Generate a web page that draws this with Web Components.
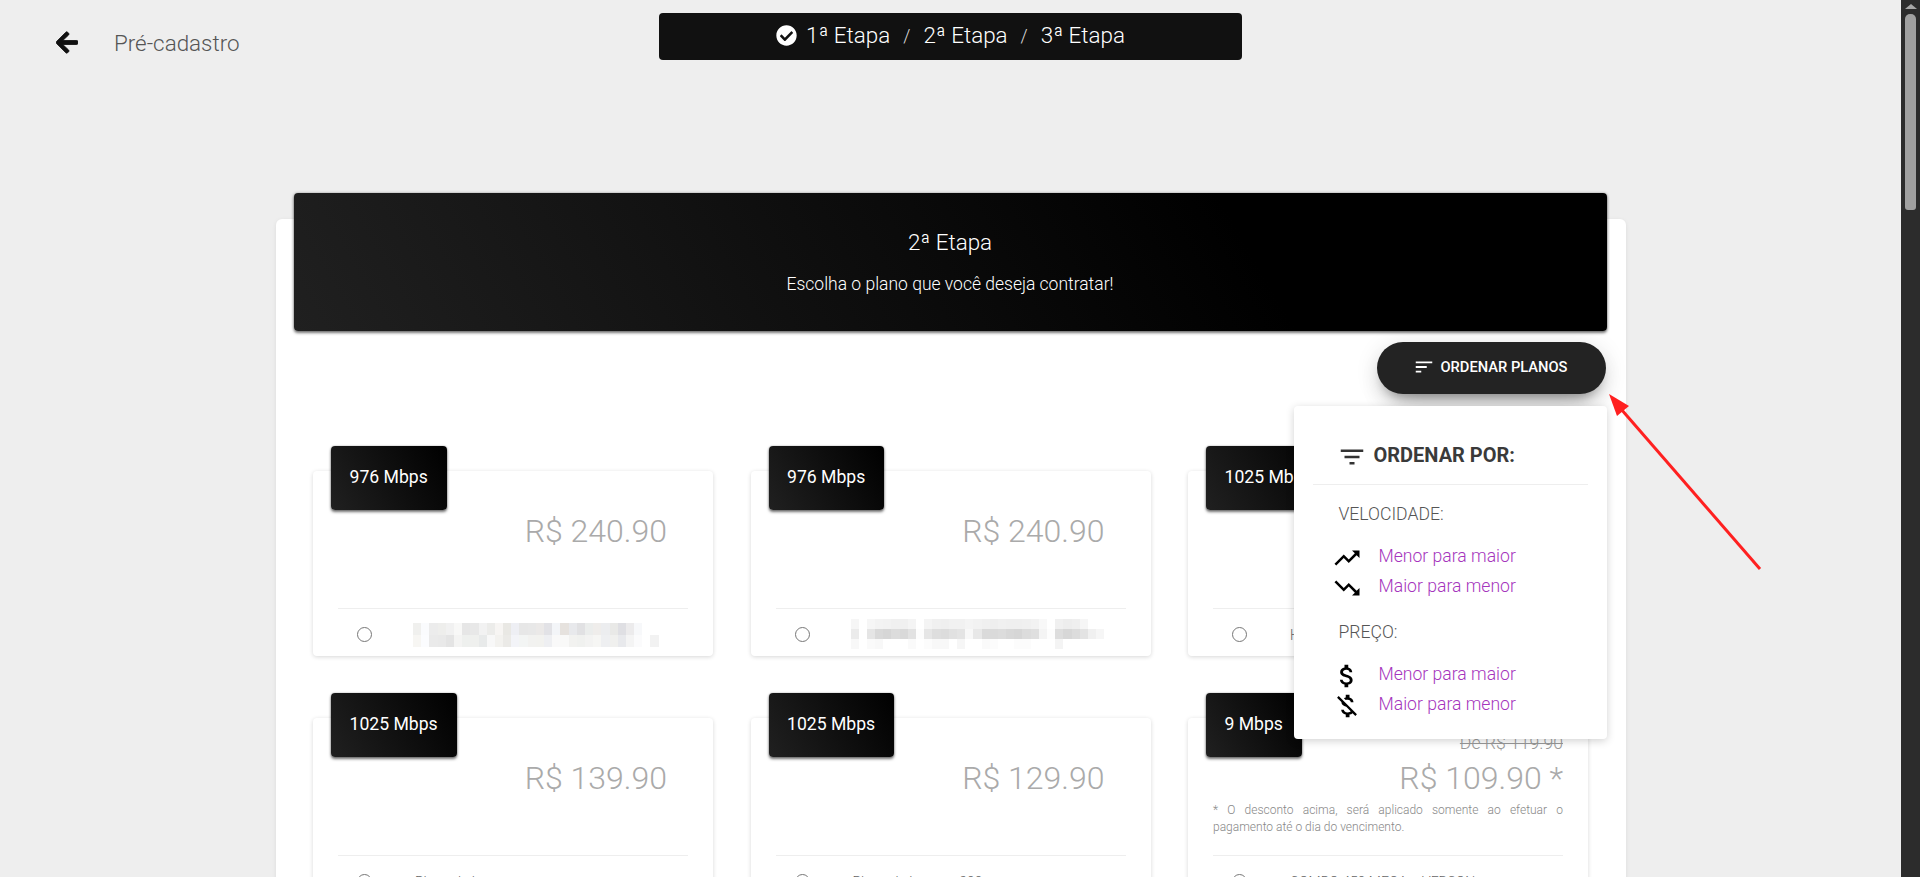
<!DOCTYPE html>
<html lang="pt-BR">
<head>
<meta charset="utf-8">
<title>Pré-cadastro</title>
<style>
html,body{margin:0;height:877px;overflow:hidden;background:#eee;font-family:Roboto,"Liberation Sans",sans-serif}
body{display:flex;position:relative}
#page{flex:1;min-width:0}
</style>
</head>
<body>
<div id="page">
  <app-topbar title-text="Pré-cadastro"></app-topbar>
  <panel-card>
    <panel-header slot="header" heading="2ª Etapa" sub="Escolha o plano que você deseja contratar!"></panel-header>
    <sort-control slot="tools"></sort-control>
    <plan-card speed="976 Mbps" price="R$ 240.90" blur="a"></plan-card>
    <plan-card speed="976 Mbps" price="R$ 240.90" blur="b"></plan-card>
    <plan-card speed="1025 Mbps" price="R$ 240.90" label="H"></plan-card>
    <plan-card speed="1025 Mbps" price="R$ 139.90" label="Plano de internet"></plan-card>
    <plan-card speed="1025 Mbps" price="R$ 129.90" label="Plano de internet 200"></plan-card>
    <plan-card speed="9 Mbps" old="De R$ 119.90" price="R$ 109.90 *" label="COMBO 450 MEGA + VERSON" note="* O desconto acima, será aplicado somente ao efetuar o pagamento até o dia do vencimento."></plan-card>
  </panel-card>
</div>
<fake-scrollbar></fake-scrollbar>
<pointer-arrow></pointer-arrow>
<script>
const ICON = {
  back:'<svg viewBox="0 0 448 512" width="22" height="25" fill="#111" stroke="#111" stroke-width="18" stroke-linejoin="round"><path d="M257.5 445.1l-22.2 22.2c-9.4 9.4-24.6 9.4-33.9 0L7 273c-9.4-9.4-9.4-24.6 0-33.9L201.4 44.7c9.4-9.4 24.6-9.4 33.9 0l22.2 22.2c9.5 9.5 9.3 25-.4 34.3L136.6 216H424c13.3 0 24 10.7 24 24v32c0 13.3-10.7 24-24 24H136.6l120.5 114.8c9.8 9.3 10 24.8.4 34.3z"/></svg>',
  check:'<svg viewBox="0 0 512 512" width="21" height="21" fill="#fff"><path d="M504 256c0 136.967-111.033 248-248 248S8 392.967 8 256 119.033 8 256 8s248 111.033 248 248zM227.314 387.314l184-184c6.248-6.248 6.248-16.379 0-22.627l-22.627-22.627c-6.248-6.249-16.379-6.25-22.628 0L216 308.118l-70.059-70.059c-6.248-6.248-16.379-6.248-22.628 0l-22.627 22.627c-6.248 6.248-6.248 16.379 0 22.627l104 104c6.249 6.249 16.379 6.249 22.628.001z"/></svg>',
  sort:'M3 18h6v-2H3v2zM3 6v2h18V6H3zm0 7h12v-2H3v2z',
  filter:'M10 18h4v-2h-4v2zM3 6v2h18V6H3zm3 7h12v-2H6v2z',
  up:'M16 6l2.29 2.29-4.88 4.88-4-4L2 16.59 3.41 18l6-6 4 4 6.3-6.29L22 12V6z',
  down:'M16 18l2.29-2.29-4.88-4.88-4 4L2 7.41 3.41 6l6 6 4-4 6.3 6.29L22 12v6z',
  money:'M11.8 10.9c-2.27-.59-3-1.2-3-2.15 0-1.09 1.01-1.85 2.7-1.85 1.78 0 2.44.85 2.5 2.1h2.21c-.07-1.72-1.12-3.3-3.21-3.81V3h-3v2.16c-1.94.42-3.5 1.68-3.5 3.61 0 2.31 1.91 3.46 4.7 4.13 2.5.6 3 1.48 3 2.41 0 .69-.49 1.79-2.7 1.79-2.06 0-2.87-.92-2.98-2.1h-2.2c.12 2.19 1.76 3.42 3.68 3.83V21h3v-2.15c1.95-.37 3.5-1.5 3.5-3.55 0-2.84-2.43-3.81-4.7-4.4z',
  moneyOff:'M12.5 6.9c1.78 0 2.44.85 2.5 2.1h2.21c-.07-1.72-1.12-3.3-3.21-3.81V3h-3v2.16c-.53.12-1.03.3-1.48.54l1.47 1.47c.41-.17.91-.27 1.51-.27zM5.33 4.06L4.06 5.33 7.5 8.77c0 2.08 1.56 3.21 3.91 3.91l3.51 3.51c-.34.48-1.05.91-2.42.91-2.06 0-2.87-.92-2.98-2.1h-2.2c.12 2.19 1.76 3.42 3.68 3.83V21h3v-2.15c.96-.18 1.82-.55 2.45-1.12l2.22 2.22 1.27-1.27L5.33 4.06z'
};
const mi = (d,s,fill) => `<svg viewBox="0 0 24 24" width="${s}" height="${s}" fill="${fill}"><path d="${d}"/></svg>`;
const define = (name, render) => customElements.define(name, class extends HTMLElement {
  connectedCallback(){ if(!this.shadowRoot){ this.attachShadow({mode:'open'}).innerHTML = render(this); } }
});

define('app-topbar', el => `<style>
:host{display:grid;grid-template-columns:1fr 583px 1fr;padding-top:13px;height:47px;color:#fff}
.left{display:flex;align-items:center;padding-left:56px;height:46px;margin-top:7px;color:#555;font:300 22.4px/1 Roboto,sans-serif}
.left svg{margin-right:36px;margin-top:-1px}
.bar{display:flex;align-items:center;justify-content:center;height:47px;padding-bottom:3px;box-sizing:border-box;border-radius:4px;background:#111;font:300 22.4px/1 Roboto,sans-serif}
.bar svg{margin-right:9px;margin-top:1px}
.sep{font-size:18px;margin:2px 13px 0 13px;color:#ddd}
</style>
<div class="left">${ICON.back}<span>${el.getAttribute('title-text')}</span></div>
<div class="bar">${ICON.check}<span>1ª Etapa</span><span class="sep">/</span><span>2ª Etapa</span><span class="sep">/</span><span>3ª Etapa</span></div>`);

define('panel-card', () => `<style>
:host{display:flow-root;width:1350px;height:900px;margin:159px auto 0;box-sizing:border-box;padding:0 19px 0 18px;background:#fff;border-radius:6px;box-shadow:0 1px 4px rgba(0,0,0,.08)}
.tools{display:flex;justify-content:flex-end;margin-top:11px;padding-right:1px;position:relative;z-index:3}
.grid{display:grid;grid-template-columns:repeat(3,400px);column-gap:37.5px;row-gap:62px;margin-top:77px;padding-left:19.5px}
</style>
<slot name="header"></slot>
<div class="tools"><slot name="tools"></slot></div>
<div class="grid"><slot></slot></div>`);

define('panel-header', el => `<style>
:host{display:flex;flex-direction:column;align-items:center;height:138px;margin-top:-26px;box-sizing:border-box;padding-top:36px;position:relative;border-radius:4px;color:#fff;background:linear-gradient(60deg,#202020 0%,#000 72%);box-shadow:0 2px 3px rgba(0,0,0,.5),0 0 3px rgba(0,0,0,.3)}
.h{font:300 22.4px/26px Roboto,sans-serif}
.s{font:300 17.5px/22px Roboto,sans-serif;margin-top:18px}
</style>
<div class="h">${el.getAttribute('heading')}</div><div class="s">${el.getAttribute('sub')}</div>`);

define('sort-control', () => `<style>
:host{display:block;position:relative}
.btn{display:flex;align-items:center;justify-content:center;gap:5px;box-sizing:border-box;width:229px;height:52px;padding:0 1px 2px 0;border-radius:26px;background:#232323;color:#fff;font:500 14.7px/1 Roboto,sans-serif;box-shadow:0 14px 26px -12px rgba(0,0,0,.42),0 4px 23px 0 rgba(0,0,0,.12),0 8px 10px -5px rgba(0,0,0,.2)}
.menu{position:absolute;right:-1px;top:64px;width:313px;height:333px;box-sizing:border-box;background:#fff;border-radius:4px;box-shadow:0 2px 8px rgba(0,0,0,.18);padding-top:34px}
.head{display:flex;align-items:center;height:30px;margin:0 19px;padding:0 0 14px 24px;border-bottom:1px solid #eee;color:#3a3a3a;font:700 20px/30px Roboto,sans-serif}
.head svg{margin-right:7px;margin-top:4px;flex:none}
.label{margin:14px 0 12px 45px;font:300 17.6px/30px Roboto,sans-serif;color:#555}
.label.second{margin-top:16px}
.row{display:flex;height:30px;padding-left:38px;align-items:center;color:#a535bd;font:300 17.6px/30px Roboto,sans-serif}
.row svg{margin-right:17px;margin-top:3px;flex:none}
</style>
<div class="btn">${mi(ICON.sort,22,'#fff')}<span>ORDENAR PLANOS</span></div>
<div class="menu">
  <div class="head">${mi(ICON.filter,30,'#333')}<span>ORDENAR POR:</span></div>
  <div class="label">VELOCIDADE:</div>
  <div class="row">${mi(ICON.up,30,'#000')}<span>Menor para maior</span></div>
  <div class="row">${mi(ICON.down,30,'#000')}<span>Maior para menor</span></div>
  <div class="label second">PREÇO:</div>
  <div class="row">${mi(ICON.money,30,'#000')}<span>Menor para maior</span></div>
  <div class="row">${mi(ICON.moneyOff,30,'#000')}<span>Maior para menor</span></div>
</div>`);

const BLUR = {
  a:{y:1,h:12,rows:[
    'f0f0ee fafbfd ececec eeeeec f1f1f1 f8f8f7 e6e6e6 e8e8e8 f2f2f2 ececea f7f5f3 e9e8e4 eeeff4 e7e7e7 e8e8e8 ebe9e8 e2e2e6 f3f5f8 e6e2de e8e9ec e1e1e3 ebedec efedeb ecedef e9e9e7 dfdfe3 ecebec f7f8fa ffffff ffffff',
    'f7f6f3 fbfcfe eaeaea e9e9e9 e4e4e4 f4f4f3 eef0ee eff0ee e8eaea f8f8f8 f3f2ef ebeae7 f3f4f8 f3f5f4 f2f2f0 f2f2ef eeeff2 f9f9f9 f9f9f8 f2f2f0 f0f1ef f3f3f2 f6f6f4 eeeff1 f0f0ee e8e9ec f4f4f4 fbfbfc ffffff f2f2f2']},
  b:{y:-2,h:10,rows:[
    'f6f6f6 ffffff f6f6f6 f3f3f3 f2f2f2 f0f0f0 f0f0f0 f4f4f4 ffffff f4f4f4 f0f0f0 efefef f1f1f1 f1f1f1 f4f4f4 f2f2f2 f0f0f0 eeeeee f0f0f0 efefef efefef f0f0f0 f2f2f2 f8f8f8 ffffff f0f0f0 ededed efefef f6f6f6 ffffff ffffff',
    'ebebeb ffffff e5e5e5 d9d9d9 d6d6d6 dcdcdc d9d9d9 e2e2e2 fdfdfd e6e6e6 dedede dcdcdc e1e1e1 e4e4e4 f8f8f8 e8e8e8 dadada dadada dcdcdc d8d8d8 d6d6d6 dcdcdc dfdfdf f4f4f4 fdfdfd dddddd d7d7d7 dcdcdc e3e3e3 f0f0f0 f6f6f6',
    'f8f8f8 ffffff fafafa f8f8f8 ffffff ffffff ffffff fafafa ffffff fcfcfc f8f8f8 f8f8f8 ffffff f6f6f6 ffffff ffffff fafafa fcfcfc ffffff ffffff fcfcfc fcfcfc ffffff ffffff ffffff f4f4f4 ffffff ffffff ffffff ffffff ffffff']}
};
const blurHTML = k => { const b = BLUR[k];
  return `<div class="mosaic" style="margin-top:${b.y}px">` + b.rows.map(r => `<div class="mr">` + r.split(' ').map(c => `<i style="background:#${c};height:${b.h}px"></i>`).join('') + `</div>`).join('') + `</div>`; };

define('plan-card', el => {
  const a = n => el.getAttribute(n), plain = !a('old');
  return `<style>
:host{display:block;height:185px;box-sizing:border-box;padding:0 25px;background:#fff;border-radius:4px;box-shadow:0 1px 4px rgba(0,0,0,.16);color:#aaa}
.tag{float:left;display:flex;align-items:center;height:64px;padding:0 19px 0 18.5px;margin:-39px 0 0 -7px;box-sizing:border-box;position:relative;border-radius:4px;color:#fff;font:400 17.6px/1 Roboto,sans-serif;background:linear-gradient(60deg,#202020,#000);box-shadow:0 2px 3px rgba(0,0,0,.55),0 0 2px rgba(0,0,0,.3)}
.head{height:138px;box-sizing:border-box;padding-top:14px;border-bottom:1px solid #eee;text-align:right}
.old{height:22px;margin-bottom:6px;font:300 17.6px/22px Roboto,sans-serif;color:#999;text-decoration:line-through}
.price{font:300 32px/36px Roboto,sans-serif}
.price.plain{margin-right:21px}
.note{clear:both;margin-top:6px;font:300 12px/17px Roboto,sans-serif;color:#888;text-align:justify}
.foot{display:flex;align-items:center;height:47px;margin-top:2px;padding-left:19px}
.radio{width:15px;height:15px;border:1.5px solid #777;border-radius:50%;box-sizing:border-box;flex:none;margin-right:43px}
.label{font:300 14px/20px Roboto,sans-serif;color:#666;white-space:nowrap}
.mosaic{display:flex;flex-direction:column;margin-left:-2px}
.mr{display:flex}
.mr i{display:block;width:8.2px}
</style>
<div class="head"><div class="tag">${a('speed')}</div>
<div class="old">${a('old')||''}</div>
<div class="price${plain?' plain':''}">${a('price')}</div>
${a('note')?`<div class="note">${a('note')}</div>`:''}</div>
<div class="foot"><div class="radio"></div>${a('blur')?blurHTML(a('blur')):`<div class="label">${a('label')||''}</div>`}</div>`;
});

define('fake-scrollbar', () => `<style>
:host{display:block;flex:none;width:19px;height:877px;background:#2c2c2c;box-sizing:border-box}
.arrow{width:0;height:0;margin:4px auto 0;border:6.5px solid transparent;border-top:0;border-bottom:5px solid #a6a6a6}
.thumb{width:11px;height:196px;margin:5px 0 0 4px;border-radius:5px 5px 3px 3px;background:#a0a0a0}
</style><div class="arrow"></div><div class="thumb"></div>`);

define('pointer-arrow', () => `<style>
:host{position:absolute;left:0;top:0;width:1920px;height:877px;pointer-events:none;z-index:10}
svg{display:block}
</style><svg width="1920" height="877" viewBox="0 0 1920 877"><line x1="1621" y1="409" x2="1760" y2="569" stroke="#ff2020" stroke-width="3"/><polygon points="1609,394 1629,406 1617,416" fill="#ff2020"/></svg>`);
</script>
</body>
</html>
